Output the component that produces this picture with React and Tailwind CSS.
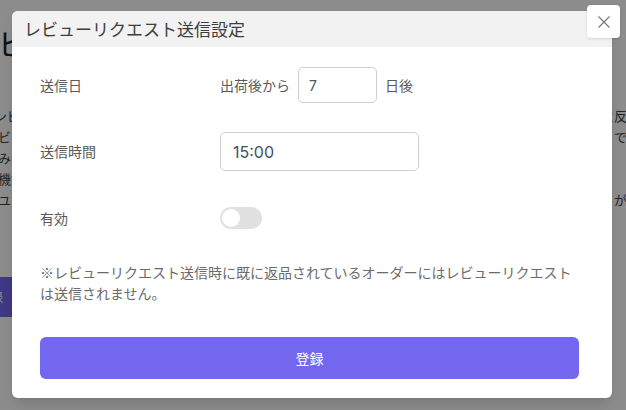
import React from "react";

const jp = { fontFamily: '"Noto Sans CJK JP", "Noto Sans", sans-serif' };

export default function App() {
  return (
    <div
      className="relative w-[626px] h-[410px] overflow-hidden bg-white text-[#333]"
      style={jp}
    >
      {/* background page */}
      <div className="flex flex-col pt-[22px]">
        <div className="ml-[-2px] text-[30px] leading-[40px] text-[#222]">ビュー</div>
        <div className="mt-[43px] flex flex-col text-[13px] leading-[21px] text-[#444]">
          <div className="flex justify-between ml-[-6px] mr-[-14px]"><span>ンビュー</span><span>に反映</span></div>
          <div className="flex justify-between ml-[-2px] mr-[-14px]"><span>ビュー</span><span>でし</span></div>
          <div className="flex justify-between ml-[-2px] mr-[-14px]"><span>みが</span><span></span></div>
          <div className="flex justify-between ml-[-2px] mr-[-14px]"><span>機能</span><span></span></div>
          <div className="flex justify-between ml-[-2px] mr-[-14px]"><span>ユー</span><span>がす</span></div>
        </div>
        <div className="mt-[67px] ml-[-40px] w-[60px] h-[40px] rounded bg-[#7367f0] text-white text-[13px] flex items-center justify-center">
          登録
        </div>
      </div>

      {/* overlay */}
      <div className="absolute inset-0 bg-black/45" />

      {/* modal */}
      <div className="absolute left-[12px] top-[11px] w-[600px] rounded-md bg-white shadow-lg overflow-hidden">
        <div className="h-[36px] bg-[#f2f2f2] pl-[12px] flex items-center text-[17px] text-[#3d3d3d]">
          レビューリクエスト送信設定
        </div>
        <div className="pl-[28px] pr-[33px] pt-[20px] pb-[19px] flex flex-col">
          <div className="flex items-center h-[36px] text-[14px] text-[#5a5a5a]">
            <div className="w-[180px]">送信日</div>
            <span>出荷後から</span>
            <div
              className="ml-[8px] w-[79px] h-[36px] rounded-[5px] border border-[#cfcfcf] flex items-center pl-[10px] text-[14px] text-[#4b5563]"
              style={{ fontFamily: "Inter, sans-serif" }}
            >
              7
            </div>
            <span className="ml-[8px]">日後</span>
          </div>

          <div className="mt-[29px] flex items-center h-[39px] text-[14px] text-[#5a5a5a]">
            <div className="w-[180px]">送信時間</div>
            <div
              className="w-[199px] h-[39px] rounded-[5px] border border-[#cfcfcf] flex items-center pl-[12px] text-[16px] text-[#3f4f5f]"
              style={{ fontFamily: "Inter, sans-serif" }}
            >
              15:00
            </div>
          </div>

          <div className="mt-[36px] flex items-center h-[22px] text-[14px] text-[#5a5a5a]">
            <div className="w-[180px]">有効</div>
            <div className="w-[42px] h-[22px] rounded-full bg-[#e1e1e1] p-[2px] flex items-center">
              <div className="w-[18px] h-[18px] rounded-full bg-white" />
            </div>
          </div>

          <p className="mt-[33px] text-[14px] leading-[21px] text-[#6b6b6b]">
            ※レビューリクエスト送信時に既に返品されているオーダーにはレビューリクエストは送信されません。
          </p>

          <button className="mt-[33px] h-[42px] w-full rounded-md bg-[#7367f0] text-white text-[14px] flex items-center justify-center">
            登録
          </button>
        </div>
      </div>

      {/* close button */}
      <button className="absolute left-[587px] top-[5px] w-[33px] h-[33px] rounded bg-white shadow-sm flex items-center justify-center text-[#777]">
        <svg width="12" height="12" viewBox="0 0 12 12" fill="none" stroke="currentColor" strokeWidth="1.2">
          <path d="M0.5 0.5 L11.5 11.5 M11.5 0.5 L0.5 11.5" />
        </svg>
      </button>
    </div>
  );
}
